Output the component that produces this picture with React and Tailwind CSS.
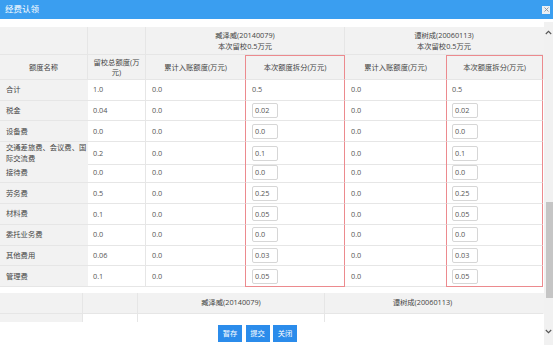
import React from "react";

const COLS = "grid grid-cols-[88px_58px_99px_100px_101px_97px]";
const LINE = "border-[#e6e6e6]";
const RED = "border-[#ec8a8e]";

const rows = [
  ["合计", "1.0", "0.0", "0.5", "0.0", "0.5", false],
  ["税金", "0.04", "0.0", "0.02", "0.0", "0.02", true],
  ["设备费", "0.0", "0.0", "0.0", "0.0", "0.0", true],
  ["交通差旅费、会议费、国际交流费", "0.2", "0.0", "0.1", "0.0", "0.1", true],
  ["接待费", "0.0", "0.0", "0.0", "0.0", "0.0", true],
  ["劳务费", "0.5", "0.0", "0.25", "0.0", "0.25", true],
  ["材料费", "0.1", "0.0", "0.05", "0.0", "0.05", true],
  ["委托业务费", "0.0", "0.0", "0.0", "0.0", "0.0", true],
  ["其他费用", "0.06", "0.0", "0.03", "0.0", "0.03", true],
  ["管理费", "0.1", "0.0", "0.05", "0.0", "0.05", true],
];

function Box({ v }) {
  return (
    <div className="w-[26px] h-[15px] border border-[#d6d6d6] rounded-[2px] bg-white flex items-center pl-[2px] text-[#555]">
      {v}
    </div>
  );
}

function Row({ r, last }) {
  const [name, a, b, c, d, e, input] = r;
  const base = `border-b ${LINE} flex items-center`;
  const bottom = last ? "border-b border-b-[#ec8a8e]" : "border-b border-b-[#e6e6e6]";
  return (
    <div className={`${COLS} h-[20.7px]`}>
      <div className={`${base} bg-[#f2f2f2] pl-[6px] pr-0 leading-[11px] text-[#444] break-all`}>{name}</div>
      <div className={`${base} border-r pl-[5px]`}>{a}</div>
      <div className={`${base} pl-[6px]`}>{b}</div>
      <div className={`flex items-center border-x border-x-[#ec8a8e] ${bottom} pl-[6px]`}>
        {input ? <Box v={c} /> : c}
      </div>
      <div className={`${base} pl-[6px]`}>{d}</div>
      <div className={`flex items-center border-x border-x-[#ec8a8e] ${bottom} pl-[5px]`}>
        {input ? <Box v={e} /> : e}
      </div>
    </div>
  );
}

export default function App() {
  return (
    <div className="w-[553px] h-[345px] overflow-hidden bg-white flex flex-col font-['Open_Sans','Noto_Sans_CJK_SC',sans-serif] text-[7.3px] text-[#555]">
      {/* title bar */}
      <div className="h-[19px] shrink-0 bg-[#3a9ef0] flex items-center justify-between pl-[5px] pr-[3px]">
        <span className="text-white text-[8.5px]">经费认领</span>
        <div className="w-[8px] h-[8px] bg-[#e9eef4] flex items-center justify-center">
          <svg width="5" height="5" viewBox="0 0 5 5">
            <path d="M0.5 0.5L4.5 4.5M4.5 0.5L0.5 4.5" stroke="#8a8f96" strokeWidth="0.9" />
          </svg>
        </div>
      </div>

      <div className="flex flex-1 min-h-0">
        {/* content */}
        <div className="flex-1 min-w-0 flex flex-col">
          <div className="flex-1 min-h-0 overflow-hidden pt-[8px]">
            {/* header row 1 */}
            <div className="grid grid-cols-[88px_58px_199px_198px] h-[28px] bg-[#f2f2f2] text-[#444]">
              <div className={`border-r border-b ${LINE}`} />
              <div className={`border-r border-b ${LINE}`} />
              <div className={`border-r border-b ${LINE} flex flex-col items-center justify-center leading-[11px]`}>
                <span>臧泽威(20140079)</span>
                <span>本次留校0.5万元</span>
              </div>
              <div className={`border-b ${LINE} flex flex-col items-center justify-center leading-[11px]`}>
                <span>谭树成(20060113)</span>
                <span>本次留校0.5万元</span>
              </div>
            </div>
            {/* header row 2 */}
            <div className={`${COLS} h-[25px] bg-[#f2f2f2] text-[#444]`}>
              <div className={`border-r border-b ${LINE} flex items-center justify-center`}>额度名称</div>
              <div className={`border-r border-b ${LINE} flex items-center justify-center text-center leading-[10px] px-[3px]`}>
                留校总额度(万元)
              </div>
              <div className={`border-b ${LINE} flex items-center justify-center`}>累计入账额度(万元)</div>
              <div className="border-x border-t border-x-[#ec8a8e] border-t-[#ec8a8e] border-b border-b-[#e6e6e6] flex items-center justify-center">本次额度拆分(万元)</div>
              <div className={`border-b ${LINE} flex items-center justify-center`}>累计入账额度(万元)</div>
              <div className="border-x border-t border-x-[#ec8a8e] border-t-[#ec8a8e] border-b border-b-[#e6e6e6] flex items-center justify-center">本次额度拆分(万元)</div>
            </div>
            {/* body */}
            {rows.map((r, i) => (
              <Row key={i} r={r} last={i === rows.length - 1} />
            ))}

            <div className="h-[6px]" />

            {/* second table (partially visible) */}
            <div className="grid grid-cols-[83px_55px_187px_195px_23px] h-[21px] bg-[#f2f2f2] text-[#444]">
              <div className={`border-r border-b ${LINE}`} />
              <div className={`border-r border-b ${LINE}`} />
              <div className={`border-r border-b ${LINE} flex items-center justify-center`}>臧泽威(20140079)</div>
              <div className={`border-b ${LINE} flex items-center justify-center`}>谭树成(20060113)</div>
              <div className={`border-b ${LINE}`} />
            </div>
            <div className="grid grid-cols-[83px_55px_187px_195px_23px] h-[21px] text-[#444]">
              <div className={`bg-[#f2f2f2] border-r ${LINE}`} />
              <div className={`border-r ${LINE}`} />
              <div className={`border-r ${LINE}`} />
              <div />
              <div />
            </div>
          </div>

          {/* button bar */}
          <div className="h-[23px] shrink-0 flex items-start pt-[3px] pl-[218px] gap-[3.5px]">
            <button className="w-[24px] h-[17px] bg-[#2b8ceb] text-white text-[7.3px] flex items-center justify-center">暂存</button>
            <button className="w-[24px] h-[17px] bg-[#2b8ceb] text-white text-[7.3px] flex items-center justify-center">提交</button>
            <button className="w-[24px] h-[17px] bg-[#2b8ceb] text-white text-[7.3px] flex items-center justify-center">关闭</button>
          </div>
        </div>

        {/* scrollbar */}
        <div className="w-[9px] shrink-0 mt-[3px] bg-[#f1f1f1] flex flex-col">
          <div className="h-[17px] flex items-center justify-center pt-[4px]">
            <svg width="7" height="5" viewBox="0 0 7 5">
              <path d="M0.8 4L3.5 1.3L6.2 4" stroke="#555" strokeWidth="1.1" fill="none" />
            </svg>
          </div>
          <div className="flex-1 flex flex-col">
            <div className="h-[163px]" />
            <div className="h-[96px] ml-[2px] bg-[#c5c5c5]" />
          </div>
          <div className="h-[22px] flex items-start justify-center pt-[6px]">
            <svg width="7" height="5" viewBox="0 0 7 5">
              <path d="M0.8 1L3.5 3.7L6.2 1" stroke="#555" strokeWidth="1.1" fill="none" />
            </svg>
          </div>
        </div>
      </div>
    </div>
  );
}
